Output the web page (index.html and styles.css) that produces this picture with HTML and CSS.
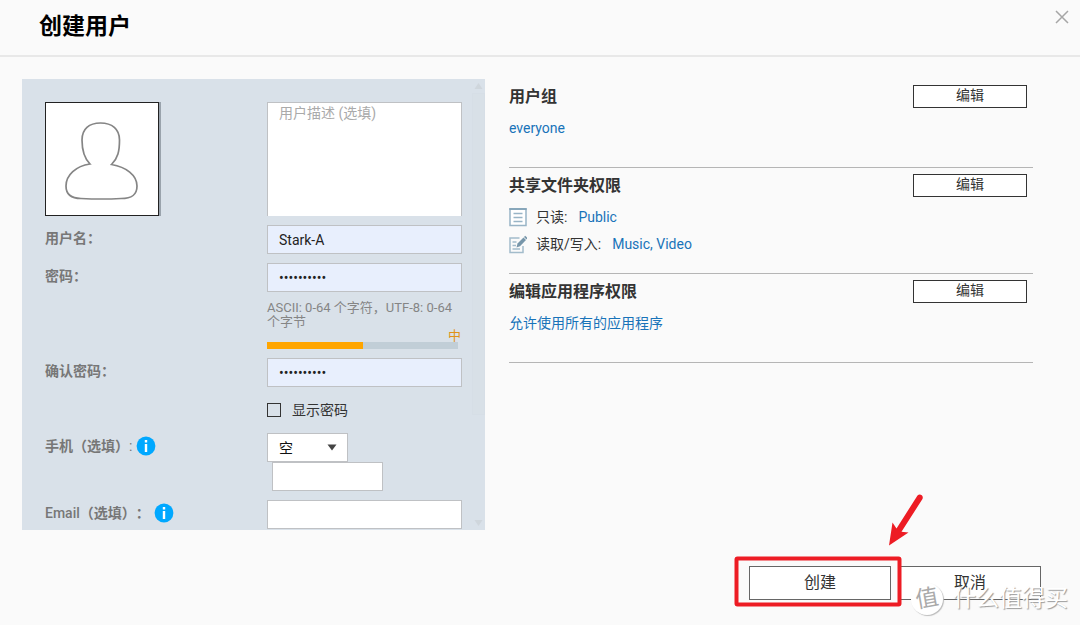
FILE: index.html
```html
<!DOCTYPE html>
<html lang="zh-CN">
<head>
<meta charset="utf-8">
<meta name="viewport" content="width=device-width, initial-scale=1">
<title>创建用户</title>
<link rel="stylesheet" href="styles.css">
</head>
<body>
<div class="dialog">
  <header class="dialog-header">
    <h1>创建用户</h1>
    <button class="close" type="button" aria-label="关闭">
      <svg width="14" height="14" viewBox="0 0 14 14"><path d="M1 1l12 12M13 1L1 13" fill="none" stroke="#a6a6a6" stroke-width="1.5"/></svg>
    </button>
  </header>

  <main class="content">
    <div class="panel">
      <form class="user-form">
        <div class="avatar">
          <svg width="112" height="112" viewBox="0 0 112 112" aria-hidden="true">
            <path d="M44 61C38 55 36 48 36 37C36 26 43 20 54.500 20C66 20 73.500 26 73.500 37C73.500 48 72 55 65.500 61.500C80 64 91 72 91 83C91 92 86 95.500 75 95.500Q56 96.500 35 95.500C25 95.500 20 91 20 83C20 72 30 63 44 61Z" fill="#fff" stroke="#858585" stroke-width="1.700"/>
          </svg>
        </div>
        <textarea class="field description" placeholder="用户描述 (选填)" aria-label="用户描述"></textarea>

        <label class="name" for="username">用户名：</label>
        <input class="field filled" id="username" type="text" value="Stark-A">

        <label class="name" for="password">密码：</label>
        <input class="field filled" id="password" type="password" value="password12">

        <div class="strength">
          <p class="hint">ASCII: 0-64 个字符，UTF-8: 0-64 个字节</p>
          <div class="level">中</div>
          <div class="meter"><div class="meter-fill"></div></div>
        </div>

        <label class="name" for="confirm">确认密码：</label>
        <input class="field filled" id="confirm" type="password" value="password12">

        <div class="show-password">
          <input id="show" type="checkbox"><label for="show">显示密码</label>
        </div>

        <div class="name phone-name">
          <label for="phone">手机（选填）<span class="thin">:</span></label>
          <svg class="info" width="20" height="20" viewBox="0 0 20 20" aria-hidden="true"><circle cx="10" cy="10" r="9.400" fill="#00a8ff"/><path d="M8.800 4h2.400v2.400H8.800zM8.800 8h2.400v8H8.800z" fill="#fff"/></svg>
        </div>
        <div class="phone">
          <div class="select-wrap">
            <select class="field" aria-label="国家代码"><option>空</option></select>
            <svg class="caret" width="10" height="7" viewBox="0 0 10 7" aria-hidden="true"><path d="M0.500 0.500h9L5 6.500z" fill="#444"/></svg>
          </div>
          <input class="field phone-number" id="phone" type="text">
        </div>

        <div class="name email-name">
          <label for="email"><span class="latin">Email</span>（选填）：</label>
          <svg class="info" width="20" height="20" viewBox="0 0 20 20" aria-hidden="true"><circle cx="10" cy="10" r="9.400" fill="#00a8ff"/><path d="M8.800 4h2.400v2.400H8.800zM8.800 8h2.400v8H8.800z" fill="#fff"/></svg>
        </div>
        <input class="field" id="email" type="text">
      </form>
      <div class="scrollbar" aria-hidden="true">
        <svg width="13" height="14" viewBox="0 0 13 14"><path d="M2.500 10L6.500 4l4 6z" fill="#cfd6dc"/></svg>
        <div class="thumb"></div>
        <svg width="13" height="14" viewBox="0 0 13 14"><path d="M2.500 4l4 6 4-6z" fill="#cfd6dc"/></svg>
      </div>
    </div>

    <div class="settings">
      <section>
        <div class="section-head"><h2>用户组</h2><button class="edit" type="button">编辑</button></div>
        <div class="section-body"><a href="#">everyone</a></div>
      </section>
      <section>
        <div class="section-head"><h2>共享文件夹权限</h2><button class="edit" type="button">编辑</button></div>
        <div class="section-body">
          <div class="access">
            <svg width="18" height="20" viewBox="0 0 18 20" aria-hidden="true"><path d="M1 2h16v16.500H1z" fill="#fff" stroke="#98b4c6" stroke-width="1.500"/><path d="M0.300 2h17.400" stroke="#7f9fb4" stroke-width="1.600"/><path d="M4.500 6.500h9M4.500 10.500h9M4.500 14.500h9" stroke="#98b4c6" stroke-width="1.400"/></svg>
            <span>只读:</span><a href="#">Public</a>
          </div>
          <div class="access">
            <svg width="18" height="20" viewBox="0 0 18 20" aria-hidden="true"><path d="M10.500 4H1v14.500h13V12" fill="none" stroke="#a3bccb" stroke-width="1.500"/><path d="M3.500 8h4M3.500 11.500h3.500M3.500 15h7.500" stroke="#a3bccb" stroke-width="1.300"/><path d="M7.500 13.500l1-4L14.500 3.500l2.500 2.500L11 12.300z" fill="#7796aa"/><path d="M15 3l1.200-1.200 2 2L17.500 5.500z" fill="#7796aa"/></svg>
            <span>读取/写入:</span><a href="#">Music, Video</a>
          </div>
        </div>
      </section>
      <section>
        <div class="section-head"><h2>编辑应用程序权限</h2><button class="edit" type="button">编辑</button></div>
        <div class="section-body"><a href="#">允许使用所有的应用程序</a></div>
      </section>
    </div>
  </main>

  <footer class="actions">
    <div class="create-wrap">
      <button class="action" type="button">创建</button>
      <svg class="callout" width="190" height="120" viewBox="730 490 190 120" aria-hidden="true"><rect x="736.500" y="558.500" width="163" height="46" rx="1" fill="none" stroke="#ed1c24" stroke-width="4"/><path d="M889 545.500L892.500 522.500L896.500 528.500L917.500 495.500Q919.500 493.500 921.800 495.200Q923.500 497 922.300 499.300L901.500 531.700L908.500 532.500Z" fill="#ed1c24"/></svg>
    </div>
    <button class="action" type="button">取消</button>
    <div class="watermark"><span class="badge"><span class="badge-text">值</span></span><span>什么值得买</span></div>
  </footer>
</div>
</body>
</html>
```

FILE: styles.css
```css
* {
  box-sizing: border-box;
}

body {
  margin: 0;
  background: #fafafa;
  color: #333;
  font: 14px/20px Roboto, "Noto Sans CJK SC", sans-serif;
}

button,
input,
select,
textarea {
  margin: 0;
  font: inherit;
  color: inherit;
}

h1,
h2,
p {
  margin: 0;
}

a {
  color: #1873b9;
  text-decoration: none;
}

.dialog {
  min-height: 100vh;
}

.dialog-header {
  display: flex;
  justify-content: space-between;
  align-items: flex-start;
  padding: 10px 11px 11px 39px;
  border-bottom: 2px solid #e8e8e8;
}

h1 {
  color: #000;
  font-size: 23px;
  line-height: 34px;
}

.close {
  display: flex;
  padding: 0;
  border: 0;
  background: none;
}

.content {
  display: grid;
  grid-template-columns: minmax(0, 463fr) minmax(0, 524fr);
  align-items: start;
  gap: 24px;
  padding: 22px 47px 0 22px;
}

.panel {
  display: flex;
  background: #d9e1e9;
}

.user-form {
  flex: 1;
  display: grid;
  grid-template-columns: minmax(0, 222fr) minmax(0, 195fr);
  gap: 9px 0;
  padding: 23px 10px 1px 23px;
}

.avatar {
  width: 114px;
  height: 114px;
  border: 1px solid #222;
  background: #fff;
  box-shadow: 2px 0 0 #9aa3ac;
}

.avatar svg {
  display: block;
}

.field {
  display: block;
  width: 100%;
  height: 29px;
  padding: 0 11px;
  border: 1px solid #bfc1c4;
  border-radius: 0;
  background: #fff;
  outline: 0;
}

.filled {
  background: #e8effd;
  color: #222;
}

.description {
  height: 114px;
  border-bottom: 0;
  resize: none;
}

.description::placeholder {
  color: #aaa;
  opacity: 1;
}

.name {
  height: 29px;
  color: #777;
  font-weight: 700;
  line-height: 27px;
}

.thin {
  font-weight: 400;
}

.latin {
  font-weight: 500;
}

.phone-name,
.email-name {
  display: flex;
  align-items: center;
  gap: 4px;
  height: 26px;
}

.email-name {
  text-spacing-trim: space-all;
}

.strength,
.show-password {
  grid-column: 2;
}

.hint {
  color: #858585;
  font-size: 13px;
  line-height: 14px;
}

.level {
  padding-right: 1px;
  color: #e0931a;
  font-size: 13px;
  line-height: 13px;
  text-align: right;
}

.meter {
  height: 7px;
  margin-right: 4px;
  background: #c1ced7;
}

.meter-fill {
  width: 50%;
  height: 100%;
  background: #ffa500;
}

.show-password {
  display: flex;
  align-items: center;
  gap: 11px;
  height: 28px;
}

.show-password input {
  width: 14px;
  height: 14px;
  border: 1px solid #333;
  appearance: none;
}

.select-wrap {
  position: relative;
  width: 81px;
}

.select-wrap select {
  appearance: none;
  color: #111;
}

.caret {
  position: absolute;
  top: 11px;
  right: 11px;
}

.phone-number {
  width: 111px;
  margin-left: 5px;
}

.scrollbar {
  display: flex;
  flex-direction: column;
  width: 13px;
}

.thumb {
  height: 322px;
  margin-bottom: auto;
  border: 1px solid #d6dee6;
  background: #d8e0e7;
}

section {
  border-bottom: 1px solid #b5b5b5;
}

.section-head {
  display: flex;
  justify-content: space-between;
  align-items: center;
  padding: 6px 6px 0 0;
}

h2 {
  font-size: 16px;
  line-height: 23px;
}

.edit {
  width: 114px;
  height: 23px;
  padding: 0 0 3px;
  border: 1px solid #333;
  background: #fff;
  line-height: 18px;
}

.section-body {
  min-height: 59px;
  padding: 10px 0 19px;
}

.access {
  display: flex;
  align-items: center;
  gap: 9px;
}

.access + .access {
  margin-top: 7px;
}

.access a {
  margin-left: 2px;
}

.actions {
  position: relative;
  display: flex;
  justify-content: flex-end;
  gap: 8px;
  padding: 36px 39px 25px;
}

.create-wrap {
  position: relative;
}

.action {
  display: block;
  width: 142px;
  height: 34px;
  padding: 0;
  border: 1px solid #666;
  background: #fff;
  font-size: 16px;
}

.callout {
  position: absolute;
  top: -76px;
  left: -19px;
  overflow: visible;
}

.watermark {
  position: absolute;
  right: 12px;
  bottom: 10px;
  display: flex;
  align-items: center;
  gap: 10px;
  color: #fff;
  font-size: 23px;
  line-height: 32px;
  text-shadow: 1px 1px 1px #999;
}

.badge {
  width: 32px;
  height: 32px;
  border-radius: 50%;
  background: #fff;
  box-shadow: 1px 1px 1px #bbb;
  color: #aaa;
  text-align: center;
  text-shadow: none;
}

.badge-text {
  display: block;
  transform: rotate(-10deg);
}
```
